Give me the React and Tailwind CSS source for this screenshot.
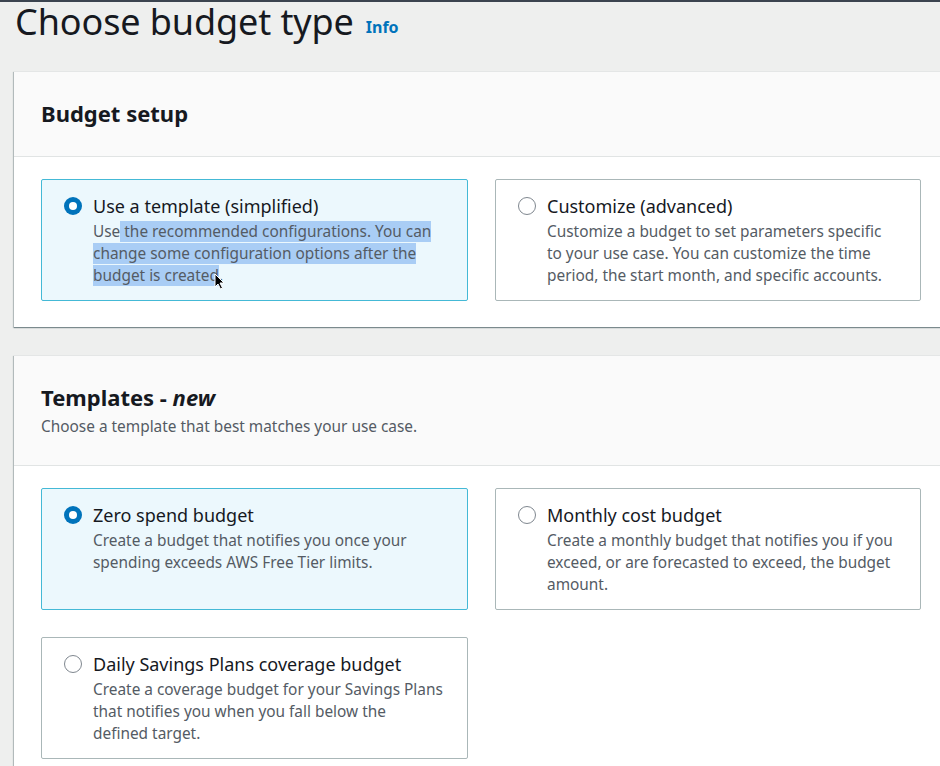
import React from "react";

const font = { fontFamily: '"Noto Sans", "Open Sans", Arial, sans-serif' };

function Radio({ checked }) {
  return checked ? (
    <span className="mt-[3px] flex h-[18px] w-[18px] shrink-0 items-center justify-center rounded-full bg-[#0073bb]">
      <span className="h-[8px] w-[8px] rounded-full bg-white" />
    </span>
  ) : (
    <span className="mt-[3px] h-[18px] w-[18px] shrink-0 rounded-full border-[1.5px] border-[#7f878f] bg-white" />
  );
}

function Option({ checked, title, children }) {
  return (
    <div
      className={
        "flex h-[122px] gap-[11px] rounded-[2px] border pl-[22px] pr-[24px] pt-[14px] " +
        (checked ? "border-[#44b9d6] bg-[#ecf8fd]" : "border-[#aab7b8] bg-white")
      }
    >
      <Radio checked={checked} />
      <div className="flex flex-col">
        <div className="text-[18px] leading-[24px] text-[#16191f]">{title}</div>
        <div className="mt-[3px] text-[15.4px] leading-[22px] text-[#545b64]">{children}</div>
      </div>
    </div>
  );
}

function Cursor() {
  return (
    <svg
      className="absolute left-[214px] top-[271px]"
      width="11"
      height="17"
      viewBox="0 0 11 17"
    >
      <path
        d="M1 1 L1 14 L4 11 L6.5 16 L8.5 15 L6 10 L10 10 Z"
        fill="#000"
        stroke="#fff"
        strokeWidth="1"
        strokeLinejoin="round"
      />
    </svg>
  );
}

export default function App() {
  const hl = "bg-[#a9cdf5]";
  return (
    <div
      className="relative h-[766px] w-[940px] overflow-hidden border-t-2 border-[#3b444f] bg-[#eeefee]"
      style={font}
    >
      <div className="flex items-baseline gap-3 pl-[15px]">
        <h1 className="text-[36px] leading-[40px] tracking-[-0.1px] text-[#16191f]">
          Choose budget type
        </h1>
        <span className="-translate-y-[2px] text-[16px] font-bold text-[#0073bb]">Info</span>
      </div>

      <div className="pl-[14px] pt-[29px]">
        <div className="w-[935px] border-t border-[#e4e6e6] bg-white shadow-[0_1px_1px_0_rgba(0,28,36,0.35),-1px_1px_1px_0_rgba(0,28,36,0.2)]">
          <div className="flex h-[85px] items-center border-b border-[#e1e4e4] bg-[#fafafa] pb-[3px] pl-[27px]">
            <h2 className="text-[22px] font-bold leading-[28px] text-[#16191f]">Budget setup</h2>
          </div>
          <div className="grid grid-cols-[427px_426px] gap-[27px] pb-[26px] pl-[27px] pt-[22px]">
            <Option checked title="Use a template (simplified)">
              Use<span className={hl}> the recommended configurations. You can</span>
              <br />
              <span className={hl}>change some configuration options after the</span>
              <br />
              <span className={hl}>budget is created</span>.
            </Option>
            <Option title="Customize (advanced)">
              Customize a budget to set parameters specific to your use case. You can customize the
              time period, the start month, and specific accounts.
            </Option>
          </div>
        </div>

        <div className="mt-[28px] w-[935px] border-t border-[#e4e6e6] bg-white shadow-[0_1px_1px_0_rgba(0,28,36,0.35),-1px_1px_1px_0_rgba(0,28,36,0.2)]">
          <div className="flex h-[110px] flex-col justify-center border-b border-[#e1e4e4] bg-[#fafafa] pl-[27px]">
            <h2 className="text-[22px] font-bold leading-[28px] text-[#16191f]">
              Templates - <em className="italic">new</em>
            </h2>
            <p className="mt-[5px] text-[15.4px] leading-[22px] text-[#545b64]">
              Choose a template that best matches your use case.
            </p>
          </div>
          <div className="grid grid-cols-[427px_426px] gap-[27px] pb-[26px] pl-[27px] pt-[22px]">
            <Option checked title="Zero spend budget">
              Create a budget that notifies you once your spending exceeds AWS Free Tier limits.
            </Option>
            <Option title="Monthly cost budget">
              Create a monthly budget that notifies you if you exceed, or are forecasted to exceed,
              the budget amount.
            </Option>
            <Option title="Daily Savings Plans coverage budget">
              Create a coverage budget for your Savings Plans that notifies you when you fall below
              the defined target.
            </Option>
          </div>
        </div>
      </div>
      <Cursor />
    </div>
  );
}
